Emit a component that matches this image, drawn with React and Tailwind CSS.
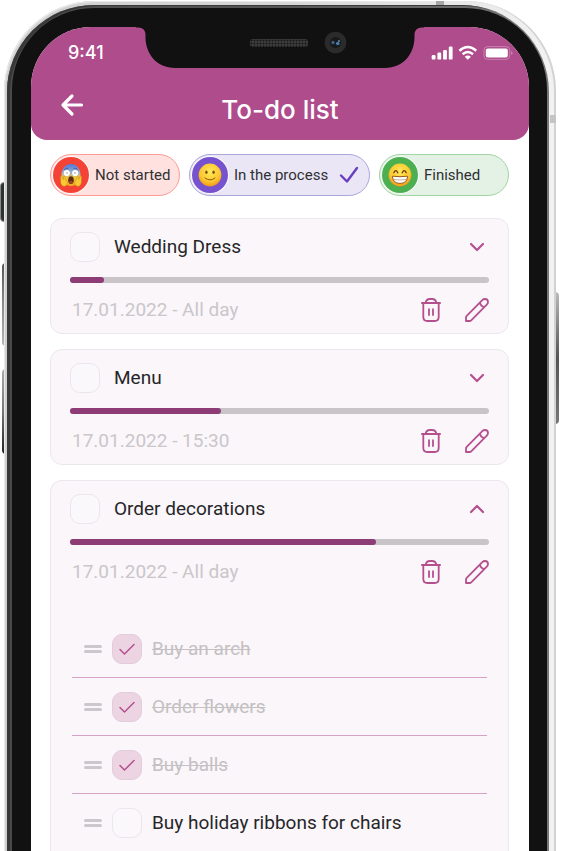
import React, { useState } from "react";
import clsx from "clsx";

function ScreamEmoji() {
  return (
    <svg viewBox="0 0 24 24" className="size-6" aria-hidden="true">
      <defs>
        <linearGradient id="scream-face" x1="0" y1="0" x2="0" y2="1">
          <stop offset="0" stopColor="#4a78e0" />
          <stop offset="0.4" stopColor="#9fb0c8" />
          <stop offset="0.62" stopColor="#f3c63c" />
          <stop offset="1" stopColor="#f0a81c" />
        </linearGradient>
      </defs>
      <ellipse cx="12" cy="12" rx="9.6" ry="11" fill="url(#scream-face)" />
      <path d="M5.2 6.6Q7 4.6 9 5.2M18.8 6.6Q17 4.6 15 5.2" stroke="#3f5aa0" strokeWidth="0.9" fill="none" strokeLinecap="round" />
      <circle cx="7.8" cy="10" r="3.1" fill="#fff" />
      <circle cx="16.2" cy="10" r="3.1" fill="#fff" />
      <circle cx="8" cy="10" r="0.7" fill="#8a7a75" />
      <circle cx="16" cy="10" r="0.7" fill="#8a7a75" />
      <ellipse cx="12" cy="17.1" rx="2.8" ry="3.9" fill="#5f2a12" />
      <ellipse cx="12" cy="19.2" rx="1.7" ry="1.3" fill="#a8452a" />
      <path d="M1.6 13.2c.9-.5 1.5.3 1.8 1.3l.8 2 .3-2.4c.2-1 1.5-.9 1.6.1l.2 2.3c1.2.7 2 1.8 2 3.2 0 2-1.3 3.6-3.2 3.6-2.2 0-3.2-1.7-3.4-4z" fill="#f8c935" stroke="#c98a17" strokeWidth="0.5" />
      <path d="M22.4 13.2c-.9-.5-1.500.3-1.800 1.300l-.8 2-.3-2.400c-.2-1-1.500-.9-1.600.1l-.2 2.300c-1.200.7-2 1.800-2 3.200 0 2 1.300 3.600 3.200 3.600 2.200 0 3.200-1.700 3.400-4z" fill="#f8c935" stroke="#c98a17" strokeWidth="0.5" />
    </svg>
  );
}

function SmileEmoji() {
  return (
    <svg viewBox="0 0 24 24" className="size-6" aria-hidden="true">
      <defs>
        <radialGradient id="smile-face" cx="0.5" cy="0.35" r="0.7">
          <stop offset="0" stopColor="#ffe95c" />
          <stop offset="0.6" stopColor="#fdc92f" />
          <stop offset="1" stopColor="#ee8d16" />
        </radialGradient>
      </defs>
      <circle cx="12" cy="12" r="11.4" fill="url(#smile-face)" />
      <ellipse cx="8.4" cy="9.3" rx="1.2" ry="1.8" fill="#7d4f14" />
      <ellipse cx="15.6" cy="9.3" rx="1.2" ry="1.8" fill="#7d4f14" />
      <path d="M7 15Q12 19 17 15" stroke="#8f5a16" strokeWidth="1" fill="none" strokeLinecap="round" />
    </svg>
  );
}

function GrinEmoji() {
  return (
    <svg viewBox="0 0 24 24" className="size-6" aria-hidden="true">
      <defs>
        <radialGradient id="grin-face" cx="0.5" cy="0.35" r="0.7">
          <stop offset="0" stopColor="#ffe95c" />
          <stop offset="0.6" stopColor="#fdc92f" />
          <stop offset="1" stopColor="#ee8d16" />
        </radialGradient>
      </defs>
      <circle cx="12" cy="12" r="11.4" fill="url(#grin-face)" />
      <path d="M5.8 9.800Q7.800 5.600 9.800 9.800M14.200 9.800Q16.200 5.600 18.200 9.800" stroke="#6b3d10" strokeWidth="1.300" fill="none" strokeLinecap="round" />
      <path d="M4.400 13.200Q12 14.200 19.600 13.200Q19.200 20.400 12 20.400Q4.800 20.400 4.400 13.200Z" fill="#fff" stroke="#8a4d18" strokeWidth="0.9" />
      <path d="M5 16.400Q12 17.600 19 16.400" stroke="#b08f78" strokeWidth="0.700" fill="none" />
    </svg>
  );
}

function TrashIcon() {
  return (
    <svg viewBox="0 0 20 24" className="h-6 w-5" fill="none" stroke="#b5508f" strokeWidth="1.800" strokeLinecap="round" aria-hidden="true">
      <path d="M0.900 5H19.100M4.600 4.800C5.200 2.200 6.800 1 8.800 1H11.200C13.200 1 14.800 2.200 15.400 4.800M2.300 5.200V19Q2.300 23 6.300 23H13.700Q17.700 23 17.700 19V5.200M8 11.200V17M12 11.200V17" />
    </svg>
  );
}

function PencilIcon() {
  return (
    <svg viewBox="0 0 24 24" className="size-6" fill="none" stroke="#b5508f" strokeWidth="1.800" strokeLinecap="round" strokeLinejoin="round" aria-hidden="true">
      <path d="M1 23V19.400Q1 18.500 1.700 17.800L17.300 2.200Q18.500 1 20 1Q23 1 23 4Q23 5.500 21.800 6.700L6.200 22.300Q5.500 23 4.600 23ZM15 4.600Q15.600 8.200 19.400 9" />
    </svg>
  );
}

function Chevron({ open }) {
  return (
    <svg viewBox="0 0 16 16" className="size-4" fill="none" stroke="#b5508f" strokeWidth="2.200" strokeLinecap="round" strokeLinejoin="round" aria-hidden="true">
      <path d={open ? "M2 11L8 5L14 11" : "M2 5L8 11L14 5"} />
    </svg>
  );
}

function StatusIcons() {
  return (
    <svg viewBox="0 0 82 16" className="h-4 w-[82px]" fill="#fff" aria-hidden="true">
      <rect x="0.700" y="10" width="3.800" height="4.600" rx="1.200" />
      <rect x="6.400" y="7.600" width="3.800" height="7" rx="1.200" />
      <rect x="12.100" y="5" width="3.800" height="9.600" rx="1.200" />
      <rect x="17.800" y="1.600" width="3.800" height="13" rx="1.200" />
      <g fill="none" stroke="#fff" strokeWidth="2.500">
        <path d="M28.400 5.700Q36.800 -1.600 45.200 5.700" />
        <path d="M31.600 9.200Q36.800 4.700 42 9.200" />
      </g>
      <path d="M33.700 11.700Q36.800 9.200 39.900 11.700L36.800 14.800Z" />
      <rect x="52.900" y="1.600" width="25.800" height="12.800" rx="3.800" fill="none" stroke="#fff" strokeOpacity="0.300" />
      <rect x="54.800" y="3.500" width="22" height="9" rx="2" />
      <path d="M80.200 6V10Q81.600 9.400 81.600 8Q81.600 6.600 80.200 6Z" fillOpacity="0.350" />
    </svg>
  );
}

function Notch() {
  return (
    <svg viewBox="0 0 288 42" className="absolute left-1/2 top-0 h-[42px] w-72 -translate-x-1/2" aria-hidden="true">
      <defs>
        <pattern id="speaker-mesh" width="3" height="3" patternUnits="userSpaceOnUse">
          <rect width="3" height="3" fill="#3d3d3d" />
          <circle cx="1.500" cy="1.500" r="1" fill="#161616" />
        </pattern>
      </defs>
      <path d="M0 0H288V0.500H286Q278.500 0.500 278.500 8V10C278.500 27 267 41 249 41H39C21 41 9.500 27 9.500 10V8Q9.500 0.500 2 0.500H0Z" fill="#111" />
      <rect x="114" y="12" width="58" height="8" rx="3" fill="url(#speaker-mesh)" />
      <circle cx="199.500" cy="15.500" r="10.800" fill="#2b2b2b" />
      <circle cx="199.500" cy="15.500" r="5.600" fill="#17191d" />
      <circle cx="197" cy="15.500" r="1.700" fill="#3d5f80" />
      <circle cx="201.800" cy="16.500" r="1.800" fill="#4a7ba8" />
      <circle cx="203" cy="14" r="0.900" fill="#6a93b8" />
    </svg>
  );
}

function CheckBox({ checked, onChange, id }) {
  return (
    <span className="relative block size-[30px] shrink-0">
      <input
        type="checkbox"
        id={id}
        checked={checked}
        onChange={onChange}
        className="block size-[30px] appearance-none rounded-[10px] border border-[#ebe6eb] bg-[#fbf8fb] checked:border-[#e3cbdc] checked:bg-[#ecd4e3]"
      />
      {checked && (
        <svg viewBox="0 0 30 30" className="pointer-events-none absolute inset-0 size-[30px]" fill="none" stroke="#b5508f" strokeWidth="1.500" strokeLinecap="round" strokeLinejoin="round" aria-hidden="true">
          <path d="M8 15.500L12.500 20L22 10.500" />
        </svg>
      )}
    </span>
  );
}

const filters = [
  { name: "Not started", Emoji: ScreamEmoji, box: "w-[130px] border-[#fb9c96] bg-[#ffe2e0]", disc: "bg-[#f44336]" },
  { name: "In the process", Emoji: SmileEmoji, box: "flex-1 border-[#a9a6dc] bg-[#eae6f6]", disc: "bg-[#7752cf]", active: true },
  { name: "Finished", Emoji: GrinEmoji, box: "w-[130px] border-[#a2d5a4] bg-[#e4f2e5]", disc: "bg-[#4caf50]" },
];

const tasks = [
  { name: "Wedding Dress", date: "17.01.2022 - All day", progress: 8 },
  { name: "Menu", date: "17.01.2022 - 15:30", progress: 36 },
  {
    name: "Order decorations",
    date: "17.01.2022 - All day",
    progress: 73,
    steps: [
      ["Buy an arch", true],
      ["Order flowers", true],
      ["Buy balls", true],
      ["Buy holiday ribbons for chairs", false],
    ],
  },
];

function FilterChip({ name, Emoji, box, disc, active }) {
  return (
    <button type="button" aria-pressed={!!active} className={clsx("flex items-center rounded-full border p-0.5 text-[15px] text-[#303033]", box)}>
      <span className={clsx("flex size-9 shrink-0 items-center justify-center rounded-full ring-1 ring-white/80", disc)}>
        <Emoji />
      </span>
      <span className="ml-1.5 whitespace-nowrap">{name}</span>
      {active && (
        <svg viewBox="0 0 20 18" className="ml-auto mr-2 h-[18px] w-5" fill="none" stroke="#6a3fbf" strokeWidth="2.400" strokeLinecap="round" strokeLinejoin="round" aria-hidden="true">
          <path d="M2 9.500L8 15.500L18 2" />
        </svg>
      )}
    </button>
  );
}

function Step({ name, initial, id, last }) {
  const [done, setDone] = useState(initial);
  return (
    <li className={clsx("flex items-center pl-3", last ? "h-[57px]" : "h-[58px] border-b border-[#d7a3c5]")}>
      <span className="flex w-[18px] flex-col gap-0.5">
        <span className="h-[3px] rounded-full bg-[#cdc7cd]" />
        <span className="h-[3px] rounded-full bg-[#cdc7cd]" />
      </span>
      <span className="ml-2.5">
        <CheckBox id={id} checked={done} onChange={() => setDone(!done)} />
      </span>
      <label htmlFor={id} className={clsx("ml-2.5 text-[19px] leading-7", done ? "text-[#c4c0c3] line-through decoration-1" : "text-[#262628]")}>
        {name}
      </label>
    </li>
  );
}

function TaskCard({ name, date, progress, steps, index }) {
  const [done, setDone] = useState(false);
  const id = `task-${index}`;
  return (
    <article className={clsx("border border-[#ece7ed] bg-[#faf6fa] px-[19px] pt-[13px]", steps ? "flex-1 rounded-t-xl border-b-0" : "rounded-xl pb-[11px]")}>
      <div className="flex h-[30px] items-center">
        <CheckBox id={id} checked={done} onChange={() => setDone(!done)} />
        <label htmlFor={id} className="ml-3.5 flex-1 text-[19px] leading-7 text-[#262628]">
          {name}
        </label>
        <button type="button" aria-label="Toggle details" aria-expanded={!!steps} className="mr-1">
          <Chevron open={!!steps} />
        </button>
      </div>
      <div role="progressbar" aria-label={name} aria-valuenow={progress} className="mt-[15px] h-1.5 overflow-hidden rounded-full bg-[#c9c4c8]">
        <div className="h-full rounded-r-full bg-[#8e3c76]" style={{ width: `${progress}%` }} />
      </div>
      <div className="mt-[15px] flex h-6 items-center">
        <p className="ml-0.5 flex-1 text-[19px] leading-7 text-[#cac6ca]">{date}</p>
        <button type="button" aria-label="Delete">
          <TrashIcon />
        </button>
        <button type="button" aria-label="Edit" className="ml-6">
          <PencilIcon />
        </button>
      </div>
      {steps && (
        <ul className="mx-0.5 mt-9">
          {steps.map(([step, initial], i) => (
            <Step key={step} id={`${id}-${i}`} name={step} initial={initial} last={i === steps.length - 1} />
          ))}
        </ul>
      )}
    </article>
  );
}

export default function App() {
  return (
    <div className="relative flex min-h-screen flex-col bg-white pl-1 pr-[5px] pt-px font-[Roboto,sans-serif]">
      <span className="absolute left-0 top-[182px] h-10 w-1.5 rounded-l-sm border border-[#8b8b8b] bg-[#2f3330]" />
      <span className="absolute left-0.5 top-[263px] h-[83px] w-1 rounded-l-sm bg-linear-to-b from-[#555] via-[#8a8d8a] to-[#b5b5b5]" />
      <span className="absolute left-0.5 top-[369px] h-[85px] w-1 rounded-l-sm bg-linear-to-b from-[#aaa] via-[#777] to-[#222]" />
      <span className="absolute right-0.5 top-[292px] h-[132px] w-[5px] rounded-r-sm bg-linear-to-b from-[#bbb] via-[#555] to-[#777]" />
      <div className="relative flex flex-1 flex-col rounded-t-[90px] bg-linear-to-r from-[#d0d0d0] via-[#d6d6d6] to-[#f2f2f2] pl-[3px] pr-[7px] pt-1 shadow-[inset_1px_1px_0_#e8e8e8,inset_-2px_0_0_#d2d2d2]">
        <span className="absolute right-[112px] top-0 h-1 w-2 bg-[#a6a6a6]" />
        <span className="absolute right-0 top-[114px] h-2 w-1.5 bg-[#c4c4c4]" />
        <div className="flex flex-1 flex-col rounded-t-[87px] bg-linear-to-r from-[#4a4a4a] via-[#555] to-[#777] pl-[5px] pr-0.5 pt-[3px] shadow-[inset_3px_1px_0_#383838]">
          <div className="flex flex-1 flex-col rounded-t-[82px] bg-[#111] pl-[19px] pr-[18px] pt-[19px]">
            <div className="relative flex flex-1 flex-col overflow-hidden rounded-t-[60px] bg-white">
              <header className="rounded-b-2xl bg-[#af4c8c] pb-3 pt-3.5">
                <div className="flex h-6 items-center justify-between pl-[37px] pr-4 text-white">
                  <span className="font-[Inter,sans-serif] text-lg font-medium">9:41</span>
                  <StatusIcons />
                </div>
                <div className="mt-[27px] grid grid-cols-[40px_1fr_40px] items-start px-[27px]">
                  <button type="button" aria-label="Back">
                    <svg viewBox="0 0 26 26" className="size-[26px]" fill="none" stroke="#fff" strokeWidth="3.200" strokeLinecap="round" strokeLinejoin="round" aria-hidden="true">
                      <path d="M14 4L5 13L14 22M5.500 13H23.500" />
                    </svg>
                  </button>
                  <h1 className="text-center font-[Inter,sans-serif] text-[26px] font-medium leading-9 text-white">To-do list</h1>
                </div>
              </header>
              <Notch />
              <main className="flex flex-1 flex-col pl-[19px] pr-5 pt-3.5">
                <div className="flex gap-[9px]">
                  {filters.map((filter) => (
                    <FilterChip key={filter.name} {...filter} />
                  ))}
                </div>
                <div className="mt-[22px] flex flex-1 flex-col gap-[15px]">
                  {tasks.map((task, i) => (
                    <TaskCard key={task.name} index={i} {...task} />
                  ))}
                </div>
              </main>
            </div>
          </div>
        </div>
      </div>
    </div>
  );
}
